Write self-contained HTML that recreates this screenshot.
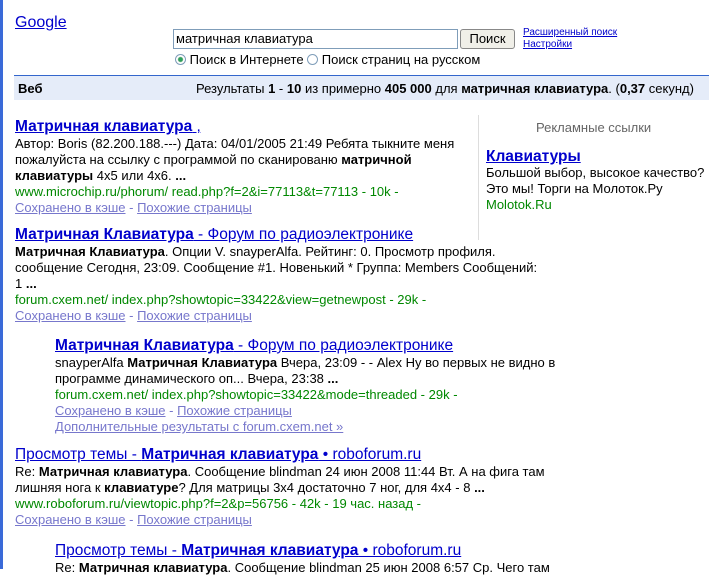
<html><head><style>
body{margin:0;width:709px;height:569px;overflow:hidden;background:#fff;font-family:"Liberation Sans",Arial,sans-serif;font-size:13px;color:#000;position:relative}
.a{position:absolute;white-space:nowrap;line-height:16px}
a{color:#00c;text-decoration:underline}
.t{font-size:15.5px;line-height:18px}
.g{color:#080}
.c a{color:#77c}
.c{color:#77c}
</style></head><body>
<div style="position:absolute;left:0;top:0;width:3px;height:569px;background:#3a6ad8"></div>
<div class="a" style="left:15px;top:15px;font-size:16px"><a href="#" style="color:#00c">Google</a></div>
<div style="position:absolute;left:173px;top:29px;width:281px;height:18px;border:1px solid #7f9db9;font-size:13px;line-height:18px;padding-left:2px">матричная клавиатура</div>
<div style="position:absolute;left:460px;top:29px;width:53px;height:18px;border:1px solid #888;border-radius:3px;background:#f0efe8;text-align:center;line-height:18px;font-size:13px">Поиск</div>
<div class="a" style="left:523px;top:27px;font-size:10px;line-height:12px"><a href="#">Расширенный поиск</a><br><a href="#">Настройки</a></div>
<div class="a" style="left:175px;top:52px">
<span style="display:inline-block;width:9px;height:9px;border:1px solid #7f9db9;border-radius:50%;vertical-align:-1px;background:radial-gradient(#2a6 0,#395 2px,#fff 3px)"></span> Поиск в Интернете <span style="display:inline-block;width:9px;height:9px;border:1px solid #7f9db9;border-radius:50%;vertical-align:-1px"></span> Поиск страниц на русском</div>
<div style="position:absolute;left:14px;top:75px;width:695px;height:24px;background:#e5ecf9;border-top:1px solid #36c"></div>
<div class="a" style="left:18px;top:81px"><b>Веб</b></div>
<div class="a" style="left:196px;top:81px">Результаты <b>1</b> - <b>10</b> из примерно <b>405 000</b> для <b>матричная клавиатура</b>. (<b>0,37</b> секунд)</div>
<div style="position:absolute;left:478px;top:115px;width:1px;height:125px;background:#ddd"></div>
<div class="a" style="left:536px;top:120px;color:#666">Рекламные ссылки</div>
<div class="a t" style="left:486px;top:148px"><a href="#"><b>Клавиатуры</b></a></div>
<div class="a" style="left:486px;top:165px">Большой выбор, высокое качество?<br>Это мы! Торги на Молоток.Ру<br><span class="g">Molotok.Ru</span></div>

<div class="a t" style="left:15px;top:118px"><a href="#"><b>Матричная клавиатура</b> ,</a></div>
<div class="a" style="left:15px;top:136px">Автор: Boris (82.200.188.---) Дата: 04/01/2005 21:49 Ребята тыкните меня<br>пожалуйста на ссылку с программой по сканированю <b>матричной</b><br><b>клавиатуры</b> 4x5 или 4x6. <b>...</b><br><span class="g">www.microchip.ru/phorum/ read.php?f=2&amp;i=77113&amp;t=77113 - 10k -</span><br><span class="c"><a href="#">Сохранено в кэше</a> - <a href="#">Похожие страницы</a></span></div>

<div class="a t" style="left:15px;top:226px"><a href="#"><b>Матричная Клавиатура</b> - Форум по радиоэлектронике</a></div>
<div class="a" style="left:15px;top:244px"><b>Матричная Клавиатура</b>. Опции V. snayperAlfa. Рейтинг: 0. Просмотр профиля.<br>сообщение Сегодня, 23:09. Сообщение #1. Новенький * Группа: Members Сообщений:<br>1 <b>...</b><br><span class="g">forum.cxem.net/ index.php?showtopic=33422&amp;view=getnewpost - 29k -</span><br><span class="c"><a href="#">Сохранено в кэше</a> - <a href="#">Похожие страницы</a></span></div>

<div class="a t" style="left:55px;top:337px"><a href="#"><b>Матричная Клавиатура</b> - Форум по радиоэлектронике</a></div>
<div class="a" style="left:55px;top:355px">snayperAlfa <b>Матричная Клавиатура</b> Вчера, 23:09 - - Alex Ну во первых не видно в<br>программе динамического оп... Вчера, 23:38 <b>...</b><br><span class="g">forum.cxem.net/ index.php?showtopic=33422&amp;mode=threaded - 29k -</span><br><span class="c"><a href="#">Сохранено в кэше</a> - <a href="#">Похожие страницы</a><br><a href="#">Дополнительные результаты с forum.cxem.net »</a></span></div>

<div class="a t" style="left:15px;top:446px"><a href="#">Просмотр темы - <b>Матричная клавиатура</b> • roboforum.ru</a></div>
<div class="a" style="left:15px;top:464px">Re: <b>Матричная клавиатура</b>. Сообщение blindman 24 июн 2008 11:44 Вт. А на фига там<br>лишняя нога к <b>клавиатуре</b>? Для матрицы 3x4 достаточно 7 ног, для 4x4 - 8 <b>...</b><br><span class="g">www.roboforum.ru/viewtopic.php?f=2&amp;p=56756 - 42k - 19 час. назад -</span><br><span class="c"><a href="#">Сохранено в кэше</a> - <a href="#">Похожие страницы</a></span></div>

<div class="a t" style="left:55px;top:542px"><a href="#">Просмотр темы - <b>Матричная клавиатура</b> • roboforum.ru</a></div>
<div class="a" style="left:55px;top:560px">Re: <b>Матричная клавиатура</b>. Сообщение blindman 25 июн 2008 6:57 Ср. Чего там</div>
</body></html>
